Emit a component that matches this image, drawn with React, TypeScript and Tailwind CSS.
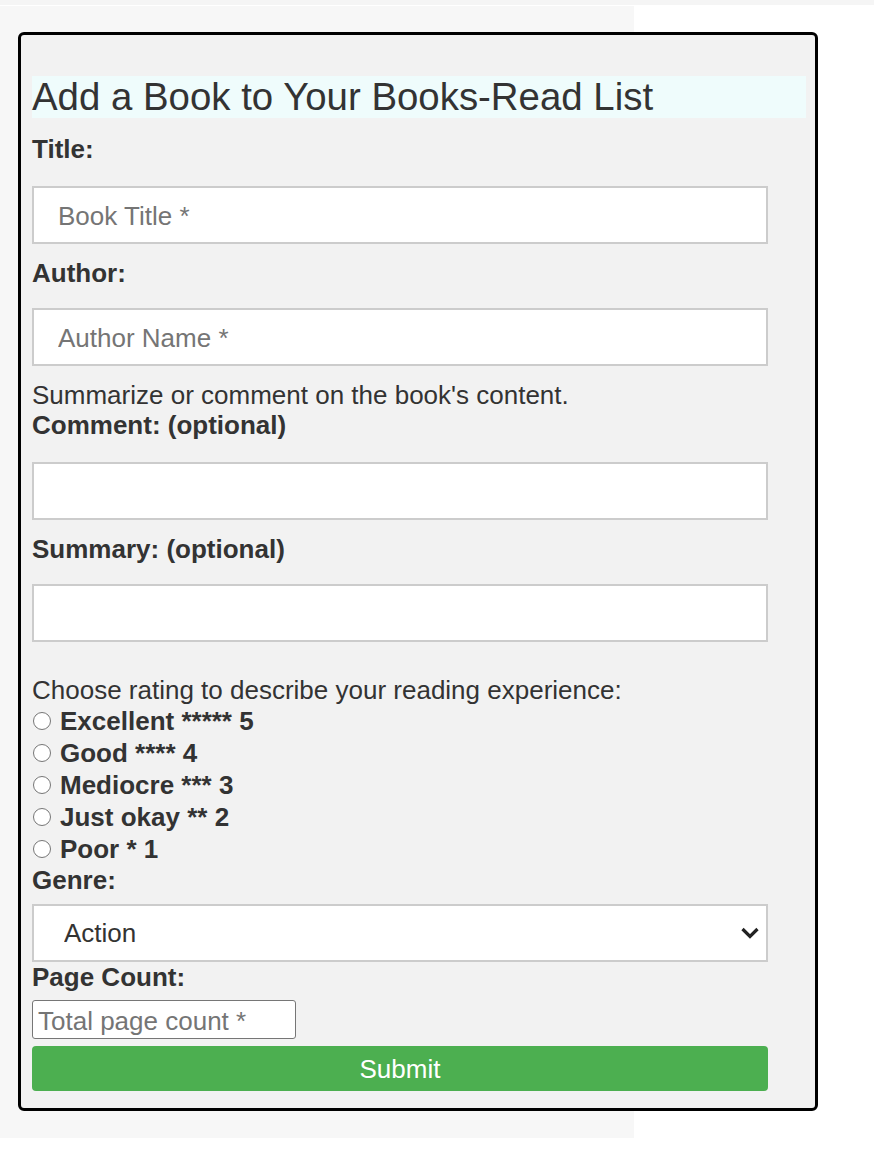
const ratings = [
  { label: 'Excellent ***** 5', value: '5' },
  { label: 'Good **** 4', value: '4' },
  { label: 'Mediocre *** 3', value: '3' },
  { label: 'Just okay ** 2', value: '2' },
  { label: 'Poor * 1', value: '1' },
];

const inputClass =
  'block w-[736px] h-[58px] border-2 border-[#ccc] bg-white pl-[24px] pt-[3px] text-[26px] outline-none placeholder:text-[#757575]';

export default function App() {
  return (
    <div className="min-h-screen bg-white font-['Liberation_Sans',Arial,sans-serif] text-[#333]">
      <div className="h-[5px] bg-[#f5f5f5]" />
      <div className="mt-[1px] w-[634px] bg-[#f7f7f7] pl-[18px] pt-[26px] pb-[27px]">
        <form
          className="w-[800px] rounded-[6px] border-[3px] border-black bg-[#f2f2f2] pl-[11px] pr-[9px] pt-[41px] pb-[17px] text-[26px] leading-[30px]"
          onSubmit={(e) => e.preventDefault()}
        >
          <h2 className="h-[42px] bg-[#effcfc] text-[38.4px] leading-[42px] font-normal">
            Add a Book to Your Books-Read List
          </h2>

          <label className="mt-[16px] block font-bold">Title:</label>
          <input type="text" placeholder="Book Title *" className={`${inputClass} mt-[22px]`} />

          <label className="mt-[14px] block font-bold">Author:</label>
          <input type="text" placeholder="Author Name *" className={`${inputClass} mt-[20px]`} />

          <p className="mt-[14px]">Summarize or comment on the book's content.</p>
          <label className="block font-bold">Comment: (optional)</label>
          <input type="text" className={`${inputClass} mt-[22px]`} />

          <label className="mt-[14px] block font-bold">Summary: (optional)</label>
          <input type="text" className={`${inputClass} mt-[20px]`} />

          <p className="mt-[33px]">Choose rating to describe your reading experience:</p>
          <div>
            {ratings.map((r) => (
              <label key={r.value} className="flex h-[32px] items-center gap-[9px] font-bold">
                <input
                  type="radio"
                  name="rating"
                  value={r.value}
                  className="ml-[1px] h-[18px] w-[18px] shrink-0 appearance-none rounded-full border border-[#767676] bg-white"
                />
                {r.label}
              </label>
            ))}
          </div>

          <label className="block font-bold">Genre:</label>
          <div className="relative mt-[9px] w-[736px]">
            <select className="block h-[58px] w-full appearance-none border-2 border-[#ccc] bg-white pl-[30px] text-[26px] outline-none">
              <option>Action</option>
              <option>Biography</option>
              <option>Fantasy</option>
              <option>Mystery</option>
              <option>Romance</option>
              <option>Science Fiction</option>
            </select>
            <svg
              className="pointer-events-none absolute right-[8px] top-[23px]"
              width="20"
              height="12"
              viewBox="0 0 20 12"
              fill="none"
            >
              <polyline points="2.5,2 10,9.5 17.5,2" stroke="#222" strokeWidth="3.2" />
            </svg>
          </div>

          <label className="block font-bold">Page Count:</label>
          <input
            type="number"
            placeholder="Total page count *"
            className="mt-[8px] block h-[39px] w-[264px] rounded-[3px] border border-[#767676] bg-white pl-[5px] pt-[3px] text-[26px] outline-none placeholder:text-[#757575]"
          />

          <button
            type="submit"
            className="mt-[7px] block h-[45px] w-[736px] rounded-[4px] bg-[#4caf50] text-[26px] text-white"
          >
            Submit
          </button>
        </form>
      </div>
    </div>
  );
}
